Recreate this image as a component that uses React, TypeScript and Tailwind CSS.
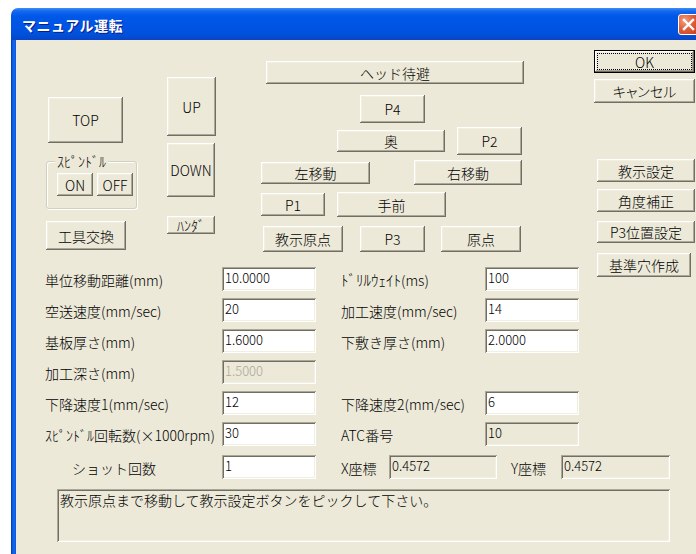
import React from "react";

type Tone = "edit" | "readonly" | "disabled";

const raised =
  "shadow-[inset_-1px_-1px_0_#716f64,inset_1px_1px_0_#ffffff,inset_-2px_-2px_0_#aca899,inset_2px_2px_0_#f1efe2]";
const sunken =
  "shadow-[inset_1px_1px_0_#aca899,inset_-1px_-1px_0_#ffffff,inset_2px_2px_0_#716f64,inset_-2px_-2px_0_#f1efe2]";

function Btn({ children, className = "" }: { children: React.ReactNode; className?: string }) {
  return (
    <button
      type="button"
      className={`flex shrink-0 items-center justify-center bg-[#ece9d8] text-[14px] leading-none text-black ${raised} ${className}`}
    >
      {children}
    </button>
  );
}

function Edit({ value, tone = "edit", className = "w-[94px]" }: { value: string; tone?: Tone; className?: string }) {
  const bg = tone === "edit" ? "bg-white" : "bg-[#ece9d8]";
  const fg = tone === "disabled" ? "text-[#aca899]" : "text-black";
  return (
    <div className={`h-[24px] shrink-0 pl-[3px] pt-[3px] text-[13px] leading-[15px] ${bg} ${fg} ${sunken} ${className}`}>
      {value}
    </div>
  );
}

function Row({ l, lv, r, rv, lTone, rTone }: { l: React.ReactNode; lv: string; r?: React.ReactNode; rv?: string; lTone?: Tone; rTone?: Tone }) {
  return (
    <div className="flex h-[24px] items-center">
      <span className="w-[177px] shrink-0 whitespace-nowrap pt-[3px]">{l}</span>
      <Edit value={lv} tone={lTone} />
      {r !== undefined && (
        <>
          <span className="ml-[25px] w-[144px] shrink-0 whitespace-nowrap pt-[3px]">{r}</span>
          <Edit value={rv ?? ""} tone={rTone} />
        </>
      )}
    </div>
  );
}

export default function App() {
  return (
    <div className="h-[554px] w-[696px] overflow-hidden bg-white pt-[8px] font-['Noto_Sans_CJK_JP',sans-serif] text-[14px] font-light text-black">
      <div className="ml-[11px] w-[693px]">
        {/* title bar */}
        <div className="flex h-[32px] items-center rounded-t-[7px] bg-[linear-gradient(180deg,#3d8ef7_0%,#1467ee_10%,#0058e8_25%,#0054e3_60%,#0050da_85%,#0a44c4_100%)] pl-[11px] pr-[5px]">
          <span className="pt-[2px] text-[14px] font-bold tracking-[0.5px] text-white [text-shadow:1px_1px_0_#0a1e8a]">
            マニュアル運転
          </span>
          <div className="ml-auto flex h-[21px] w-[21px] items-center justify-center rounded-[3px] border border-white bg-[radial-gradient(circle_at_30%_30%,#f0a080,#e0603a_45%,#c33d16)]">
            <svg width="13" height="13" viewBox="0 0 13 13">
              <path d="M2 2 L11 11 M11 2 L2 11" stroke="#fff" strokeWidth="2.4" strokeLinecap="square" />
            </svg>
          </div>
        </div>

        <div className="flex">
          <div className="w-[5px] shrink-0 bg-[linear-gradient(90deg,#0a2fb8_0%,#0855dd_25%,#166aee_60%,#0855dd_100%)]" />
          <div className="h-[514px] flex-1 bg-[#ece9d8]">
            <div className="flex">
              <div className="w-[578px] shrink-0">
                <div className="flex items-start">
                  {/* column: TOP / spindle / tool change */}
                  <div className="ml-[30px] flex w-[91px] shrink-0 flex-col items-start">
                    <Btn className="ml-[2px] mt-[57px] h-[46px] w-[75px]">TOP</Btn>
                    <div className="relative mt-[18px] h-[48px] w-[91px] rounded-[3px] border border-[#d0d0bf] shadow-[inset_1px_1px_0_#ffffff,1px_1px_0_#ffffff]">
                      <span className="absolute left-[8px] top-[-9px] bg-[#ece9d8] px-[2px] text-[14px] leading-[16px]">ｽﾋﾟﾝﾄﾞﾙ</span>
                      <div className="ml-[10px] mt-[11px] flex gap-[4px]">
                        <Btn className="h-[23px] w-[36px]">ON</Btn>
                        <Btn className="h-[23px] w-[36px]">OFF</Btn>
                      </div>
                    </div>
                    <Btn className="mt-[12px] h-[29px] w-[80px]">工具交換</Btn>
                  </div>

                  {/* column: UP / DOWN / solder */}
                  <div className="ml-[30px] flex w-[49px] shrink-0 flex-col items-start">
                    <Btn className="mt-[37px] h-[59px] w-[49px]">UP</Btn>
                    <Btn className="mt-[7px] h-[54px] w-[48px]">DOWN</Btn>
                    <Btn className="mt-[19px] h-[18px] w-[48px] text-[14px]">ﾊﾝﾀﾞ</Btn>
                  </div>

                  {/* column: jog pad */}
                  <div className="ml-[45px] flex w-[264px] shrink-0 flex-col items-start">
                    <Btn className="ml-[5px] mt-[21px] h-[23px] w-[258px]">ヘッド待避</Btn>
                    <Btn className="ml-[99px] mt-[11px] h-[28px] w-[65px]">P4</Btn>
                    <div className="mt-[4px] flex h-[28px] items-center">
                      <Btn className="ml-[76px] h-[22px] w-[108px]">奥</Btn>
                      <Btn className="ml-[12px] h-[28px] w-[65px]">P2</Btn>
                    </div>
                    <div className="mt-[5px] flex h-[25px] items-center">
                      <Btn className="h-[22px] w-[109px]">左移動</Btn>
                      <Btn className="ml-[44px] h-[25px] w-[108px]">右移動</Btn>
                    </div>
                    <div className="mt-[7px] flex h-[25px] items-center">
                      <Btn className="h-[23px] w-[64px]">P1</Btn>
                      <Btn className="ml-[12px] h-[25px] w-[109px]">手前</Btn>
                    </div>
                    <div className="mt-[9px] flex h-[26px] items-center">
                      <Btn className="ml-[2px] h-[26px] w-[80px]">教示原点</Btn>
                      <Btn className="ml-[17px] h-[26px] w-[65px]">P3</Btn>
                      <Btn className="ml-[16px] h-[26px] w-[80px]">原点</Btn>
                    </div>
                  </div>
                </div>

                {/* parameters */}
                <div className="mt-[15px] flex flex-col gap-[7px] pl-[29px]">
                  <Row l="単位移動距離(mm)" lv="10.0000" r={<span className="text-[15px]">ﾄﾞﾘﾙｳｪｲﾄ<span className="text-[14px]">(ms)</span></span>} rv="100" />
                  <Row l="空送速度(mm/sec)" lv="20" r="加工速度(mm/sec)" rv="14" />
                  <Row l="基板厚さ(mm)" lv="1.6000" r="下敷き厚さ(mm)" rv="2.0000" />
                  <Row l="加工深さ(mm)" lv="1.5000" lTone="disabled" />
                  <Row l="下降速度1(mm/sec)" lv="12" r="下降速度2(mm/sec)" rv="6" />
                  <Row l="ｽﾋﾟﾝﾄﾞﾙ回転数(×1000rpm)" lv="30" r="ATC番号" rv="10" rTone="readonly" />
                </div>
              </div>

              {/* right buttons */}
              <div className="flex w-[101px] shrink-0 flex-col items-start">
                <button
                  type="button"
                  className={`mt-[10px] flex h-[23px] w-[101px] items-center justify-center border border-black bg-[#ece9d8] leading-none outline-1 -outline-offset-4 outline-black outline-dotted ${raised}`}
                >
                  OK
                </button>
                <Btn className="mt-[6px] h-[24px] w-[101px] text-[13px] [font-feature-settings:'palt']">キャンセル</Btn>
                <Btn className="ml-[3px] mt-[56px] h-[23px] w-[98px]">教示設定</Btn>
                <Btn className="ml-[3px] mt-[7px] h-[23px] w-[98px]">角度補正</Btn>
                <Btn className="ml-[3px] mt-[9px] h-[22px] w-[98px]">P3位置設定</Btn>
                <Btn className="ml-[3px] mt-[10px] h-[24px] w-[94px]">基準穴作成</Btn>
              </div>
            </div>

            {/* shot count and coordinates */}
            <div className="mt-[9px] flex h-[24px] items-center pl-[56px]">
              <span className="w-[150px] shrink-0 pt-[3px]">ショット回数</span>
              <Edit value="1" />
              <span className="ml-[25px] w-[48px] shrink-0 pt-[3px]">X座標</span>
              <Edit value="0.4572" tone="readonly" className="w-[108px]" />
              <span className="ml-[14px] w-[50px] shrink-0 pt-[3px]">Y座標</span>
              <Edit value="0.4572" tone="readonly" className="w-[109px]" />
            </div>

            {/* message */}
            <div className={`ml-[41px] mt-[10px] h-[53px] w-[613px] bg-[#ece9d8] pl-[3px] pt-[3px] leading-[16px] ${sunken}`}>
              教示原点まで移動して教示設定ボタンをピックして下さい。
            </div>
          </div>
        </div>
      </div>
    </div>
  );
}
